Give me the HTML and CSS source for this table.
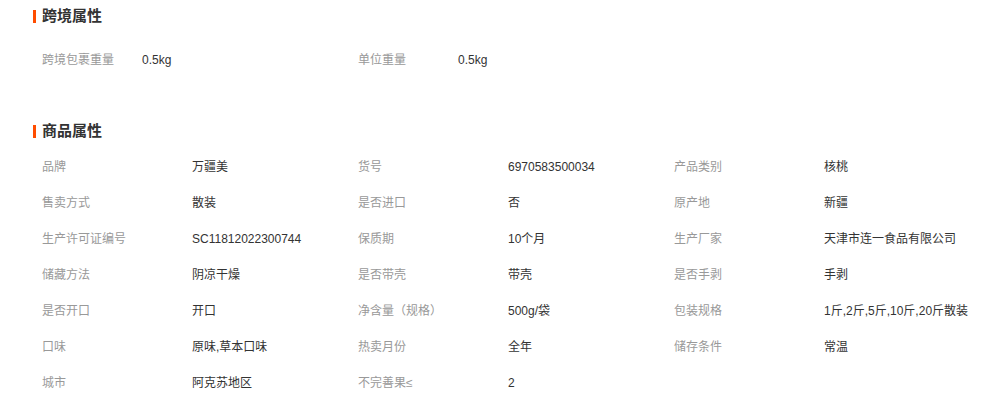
FILE: index.html
```html
<!DOCTYPE html>
<html lang="zh-CN">
<head>
    <meta charset="UTF-8">
    <title>商品属性</title>
    <link rel="stylesheet" href="styles.css">
</head>
<body>
    <div class="attr-section cross">
        <h3 class="attr-title">跨境属性</h3>
        <div class="attr-grid">
            <span class="label">跨境包裹重量</span><span class="value">0.5kg</span>
            <span class="label">单位重量</span><span class="value">0.5kg</span>
        </div>
    </div>

    <div class="attr-section goods">
        <h3 class="attr-title">商品属性</h3>
        <div class="attr-grid">
            <span class="label">品牌</span><span class="value">万疆美</span>
            <span class="label">货号</span><span class="value">6970583500034</span>
            <span class="label">产品类别</span><span class="value">核桃</span>

            <span class="label">售卖方式</span><span class="value">散装</span>
            <span class="label">是否进口</span><span class="value">否</span>
            <span class="label">原产地</span><span class="value">新疆</span>

            <span class="label">生产许可证编号</span><span class="value">SC11812022300744</span>
            <span class="label">保质期</span><span class="value">10个月</span>
            <span class="label">生产厂家</span><span class="value">天津市连一食品有限公司</span>

            <span class="label">储藏方法</span><span class="value">阴凉干燥</span>
            <span class="label">是否带壳</span><span class="value">带壳</span>
            <span class="label">是否手剥</span><span class="value">手剥</span>

            <span class="label">是否开口</span><span class="value">开口</span>
            <span class="label">净含量（规格）</span><span class="value">500g/袋</span>
            <span class="label">包装规格</span><span class="value">1斤,2斤,5斤,10斤,20斤散装</span>

            <span class="label">口味</span><span class="value">原味,草本口味</span>
            <span class="label">热卖月份</span><span class="value">全年</span>
            <span class="label">储存条件</span><span class="value">常温</span>

            <span class="label">城市</span><span class="value">阿克苏地区</span>
            <span class="label">不完善果≤</span><span class="value">2</span>
        </div>
    </div>
</body>
</html>
```

FILE: styles.css
```css
body {
    margin: 0;
    background: #fff;
    font-family: "Liberation Sans", "Noto Sans CJK SC", sans-serif;
    font-size: 12px;
    color: #333;
}
.attr-section {
    padding-left: 33px;
}
.attr-title {
    margin: 0;
    height: 32px;
    line-height: 32px;
    font-size: 15px;
    font-weight: bold;
    color: #333;
    display: flex;
    align-items: center;
}
.attr-title::before {
    content: "";
    width: 3px;
    height: 13px;
    background: #ff4d00;
    margin-right: 6px;
}
.attr-grid {
    display: grid;
    padding-left: 9px;
}
.attr-grid span {
    height: 36px;
    line-height: 36px;
    white-space: nowrap;
}
.label {
    color: #999;
}
.value {
    color: #333;
}
.cross .attr-grid {
    grid-template-columns: 100px 216px 100px auto;
    padding-top: 10px;
}
.goods {
    margin-top: 37px;
}
.goods .attr-grid {
    grid-template-columns: 150px 166px 150px 166px 150px auto;
    padding-top: 2px;
}
```
